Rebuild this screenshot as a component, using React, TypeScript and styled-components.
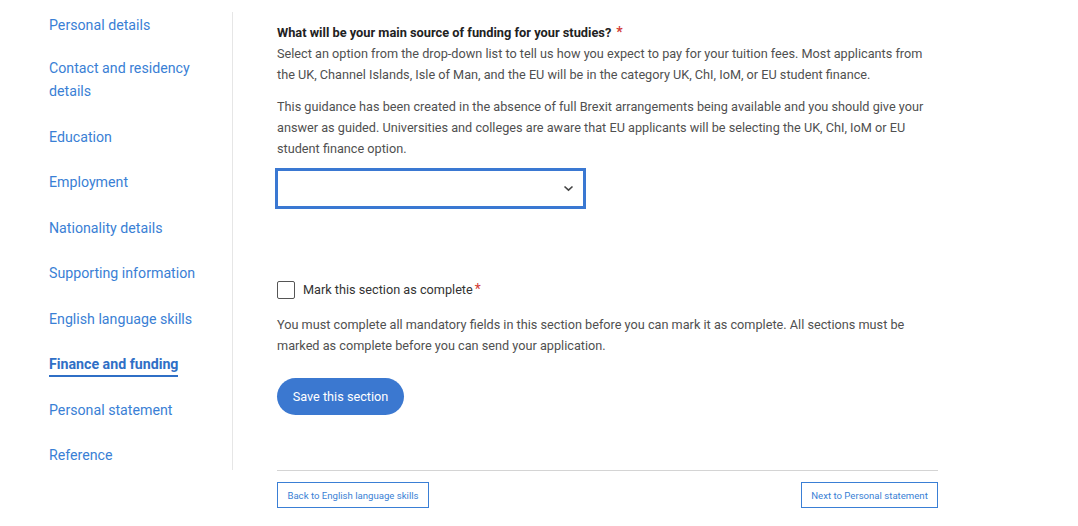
import styled, { createGlobalStyle } from "styled-components";

const GlobalStyle = createGlobalStyle`
  html, body {
    margin: 0;
    padding: 0;
    background: #fff;
    font-family: Roboto, "Liberation Sans", Arial, sans-serif;
    color: #333;
  }
`;

const Page = styled.div`
  display: flex;
  align-items: flex-start;
  padding-top: 12px;
`;

const Sidebar = styled.nav`
  width: 183px;
  height: 458px;
  padding-left: 49px;
  border-right: 1px solid #e6e6e6;
  box-sizing: content-box;
`;

const NavList = styled.ul`
  list-style: none;
  margin: 0;
  padding: 1.5px 0 0;
  display: flex;
  flex-direction: column;
  gap: 22.5px;

  li:first-child {
    margin-bottom: -2px;
  }
`;

const NavLink = styled.a<{ $active?: boolean }>`
  display: inline-block;
  font-size: 14.2px;
  text-decoration: none;
  font-weight: ${(p) => (p.$active ? 700 : 400)};
  color: ${(p) => (p.$active ? "#2f6fc6" : "#3a7fd5")};
  border-bottom: ${(p) => (p.$active ? "2px solid #2f6fc6" : "none")};
  line-height: ${(p) => (p.$active ? "22px" : "23px")};
  margin-bottom: ${(p) => (p.$active ? "-1px" : "0")};
  max-width: 150px;
`;

const Main = styled.main`
  width: 661px;
  padding-left: 44px;
  padding-top: 10px;
`;

const Question = styled.h2`
  margin: 0;
  font-size: 12.8px;
  line-height: 21px;
  font-weight: 700;
  color: #222;
`;

const Required = styled.span`
  color: #d23b36;
  margin-left: 5px;
  font-size: 14px;
  line-height: 1;
`;

const Text = styled.p<{ $gap?: number }>`
  margin: ${(p) => p.$gap ?? 0}px 0 0;
  font-size: 12.7px;
  line-height: 21px;
  color: #505050;
`;

const SelectBox = styled.div`
  margin-top: 9.5px;
  margin-left: -2px;
  width: 311px;
  height: 41px;
  box-sizing: border-box;
  border: 3px solid #3a78d2;
  background: #fff;
  display: flex;
  align-items: center;
  justify-content: flex-end;
  padding-right: 9px;
`;

const CheckRow = styled.label`
  margin-top: 70px;
  display: flex;
  align-items: center;
  gap: 8px;
  font-size: 12.7px;
  line-height: 21px;
  color: #333;
`;

const Box = styled.span`
  width: 18px;
  height: 18px;
  box-sizing: border-box;
  border: 1.5px solid #555;
  border-radius: 2px;
  display: inline-block;
`;

const StarTight = styled.span`
  color: #d23b36;
  margin-left: 2px;
  font-size: 14px;
  line-height: 1;
`;

const SaveButton = styled.button`
  margin-top: 22px;
  height: 37px;
  width: 127px;
  border: none;
  border-radius: 19px;
  background: #3b78d0;
  color: #fff;
  font-family: inherit;
  font-size: 12.7px;
  cursor: pointer;
`;

const Footer = styled.div`
  margin-top: 55.5px;
  border-top: 1px solid #d4d4d4;
  padding-top: 11px;
  display: flex;
  justify-content: space-between;
`;

const NavButton = styled.button<{ $w: number }>`
  height: 26px;
  width: ${(p) => p.$w}px;
  box-sizing: border-box;
  border: 1.5px solid #3a7fd5;
  background: #fff;
  color: #3a7fd5;
  font-family: inherit;
  font-size: 9.6px;
  padding: 0;
`;

const items = [
  "Personal details",
  "Contact and residency details",
  "Education",
  "Employment",
  "Nationality details",
  "Supporting information",
  "English language skills",
  "Finance and funding",
  "Personal statement",
  "Reference",
];

export default function App() {
  return (
    <>
      <GlobalStyle />
      <Page>
        <Sidebar>
          <NavList>
            {items.map((it) => (
              <li key={it}>
                <NavLink href="#" $active={it === "Finance and funding"}>
                  {it}
                </NavLink>
              </li>
            ))}
          </NavList>
        </Sidebar>
        <Main>
          <Question>
            What will be your main source of funding for your studies?
            <Required>*</Required>
          </Question>
          <Text>
            Select an option from the drop-down list to tell us how you expect to pay for your
            tuition fees. Most applicants from the UK, Channel Islands, Isle of Man, and the EU
            will be in the category UK, ChI, IoM, or EU student finance.
          </Text>
          <Text $gap={10.5}>
            This guidance has been created in the absence of full Brexit arrangements being
            available and you should give your answer as guided. Universities and colleges are
            aware that EU applicants will be selecting the UK, ChI, IoM or EU student finance
            option.
          </Text>
          <SelectBox>
            <svg width="11" height="7" viewBox="0 0 11 7">
              <path d="M1.5 1.5 L5.5 5.2 L9.5 1.5" fill="none" stroke="#444" strokeWidth="1.6" />
            </svg>
          </SelectBox>
          <CheckRow>
            <Box />
            <span>
              Mark this section as complete<StarTight>*</StarTight>
            </span>
          </CheckRow>
          <Text $gap={13.5}>
            You must complete all mandatory fields in this section before you can mark it as
            complete. All sections must be marked as complete before you can send your
            application.
          </Text>
          <SaveButton>Save this section</SaveButton>
          <Footer>
            <NavButton $w={152}>Back to English language skills</NavButton>
            <NavButton $w={137}>Next to Personal statement</NavButton>
          </Footer>
        </Main>
      </Page>
    </>
  );
}
